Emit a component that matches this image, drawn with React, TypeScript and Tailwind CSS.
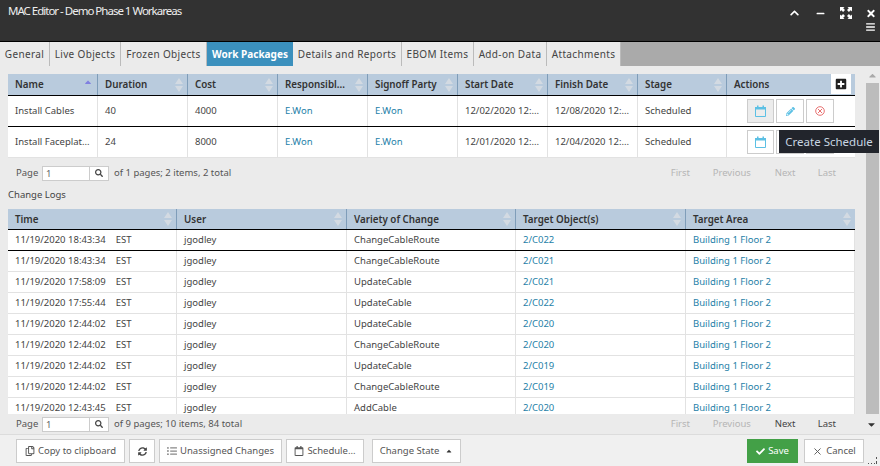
import React from "react";
import { FaChevronUp, FaMinus, FaTimes, FaBars, FaPlusSquare, FaCheck, FaCaretUp, FaCaretDown, FaPencilAlt, FaSearch, FaSyncAlt, FaListUl, FaRegCalendar, FaRegCopy } from "react-icons/fa";
import { X } from "lucide-react";

const font = "font-['Open_Sans',sans-serif]";

function SortIcon() {
  return (
    <svg viewBox="0 0 8 14" className="w-[8px] h-[14px] shrink-0" fill="#d3dae2">
      <path d="M4 0l4 6H0zM0 8h8l-4 6z" />
    </svg>
  );
}

function CalIcon() {
  return (
    <svg viewBox="0 0 11 12" className="w-[11px] h-[12px]" fill="none">
      <path d="M.5 2.500h10v9H.5z" stroke="#5cc0e4" />
      <path d="M0 2h11v2.500H0zM2 .5h1.500v2H2zM7.500.5H9v2H7.500z" fill="#5cc0e4" />
    </svg>
  );
}

function HeadCell({ label, w, sort = "both", last = false }: { label: string; w: string; sort?: string; last?: boolean }) {
  return (
    <div className={`${w} flex items-center justify-between pl-[7px] pr-[4px] ${last ? "" : "border-r border-[#7f9db9]"}`}>
      <span className="font-semibold text-[#333] text-[9.8px] whitespace-nowrap pt-[1px]">{label}</span>
      {sort === "both" && <SortIcon />}
      {sort === "asc" && <FaCaretUp className="text-[#8080e0] w-[10px] h-[10px] -mt-[5px]" />}
    </div>
  );
}

function Cell({ w, children, link = false }: { w: string; children?: React.ReactNode; link?: boolean }) {
  return (
    <div className={`${w} h-full flex items-center pl-[7px] border-r border-[#e2e2e2] whitespace-nowrap ${link ? "text-[#1f7fa8]" : "text-[#444]"}`}>
      {children}
    </div>
  );
}

const packageCols = ["w-[90px]", "w-[90px]", "w-[90px]", "w-[90px]", "w-[90px]", "w-[90px]", "w-[90px]", "w-[89px]"];

const packages = [
  ["Install Cables", "40", "4000", "E.Won", "E.Won", "12/02/2020 12:...", "12/08/2020 12:...", "Scheduled"],
  ["Install Faceplat...", "24", "8000", "E.Won", "E.Won", "12/01/2020 12:...", "12/04/2020 12:...", "Scheduled"],
];

const logCols = ["w-[169px]", "w-[170px]", "w-[169px]", "w-[170px]", "w-[169px]"];

const logs = [
  ["11/19/2020 18:43:34", "ChangeCableRoute", "2/C022"],
  ["11/19/2020 18:43:34", "ChangeCableRoute", "2/C021"],
  ["11/19/2020 17:58:09", "UpdateCable", "2/C021"],
  ["11/19/2020 17:55:44", "UpdateCable", "2/C022"],
  ["11/19/2020 12:44:02", "UpdateCable", "2/C020"],
  ["11/19/2020 12:44:02", "ChangeCableRoute", "2/C020"],
  ["11/19/2020 12:44:02", "UpdateCable", "2/C019"],
  ["11/19/2020 12:44:02", "ChangeCableRoute", "2/C019"],
  ["11/19/2020 12:43:45", "AddCable", "2/C020"],
];

function Pager({ text, nextEnabled = false }: { text: string; nextEnabled?: boolean }) {
  const off = "text-[#b5b5b5]";
  const on = nextEnabled ? "text-[#444]" : off;
  return (
    <div className="flex items-center h-full text-[#555]">
      <span className="ml-[8px] w-[26px]">Page</span>
      <div className="w-[48px] h-[15px] bg-white border border-[#ccc] text-[#666] pl-[3px] leading-[13px]">1</div>
      <div className="w-[19px] h-[15px] bg-white border border-[#ccc] border-l-0 flex items-center justify-center">
        <FaSearch className="w-[8px] h-[8px] text-[#444]" />
      </div>
      <span className="ml-[5px]">{text}</span>
      <div className="ml-auto flex mr-[19px]">
        <span className={`${off} w-[42px]`}>First</span>
        <span className={`${off} w-[62px]`}>Previous</span>
        <span className={`${on} w-[43px]`}>Next</span>
        <span className={on}>Last</span>
      </div>
    </div>
  );
}

function FootBtn({ w, children, ml = "" }: { w: string; children: React.ReactNode; ml?: string }) {
  return (
    <div className={`${w} ${ml} h-[24px] bg-white border border-[#ccc] flex items-center justify-center gap-[3px] text-[#555] whitespace-nowrap`}>
      {children}
    </div>
  );
}

export default function App() {
  return (
    <div className={`${font} relative w-[880px] h-[466px] overflow-hidden flex flex-col bg-[#ebebeb] text-[9.5px] leading-none`}>
      {/* Title bar */}
      <div className="h-[42px] shrink-0 bg-[#323232] border-b border-black flex justify-between text-white">
        <div className="pl-[8px] pt-[5px] text-[11.5px] leading-[12px] tracking-[-1px] text-[#eee]">MAC Editor - Demo Phase 1 Workareas</div>
        <div className="flex flex-col items-end pr-[4px] pt-[7px]">
          <div className="flex items-center">
            <FaChevronUp className="w-[11px] h-[10px]" />
            <FaMinus className="ml-[16px] w-[9px] h-[9px]" />
            <svg viewBox="0 0 12 12" className="ml-[15px] w-[12px] h-[12px]" fill="white">
              <path d="M0 0h4.500L3.200 1.300 5 3.100 3.100 5 1.300 3.200 0 4.500zM12 0v4.500l-1.300-1.300L8.900 5 7 3.100l1.800-1.800L7.500 0zM0 12V7.500l1.300 1.300L3.100 7 5 8.900l-1.800 1.800L4.500 12zM12 12H7.500l1.300-1.300L7 8.900 8.900 7l1.800 1.800L12 7.500z" />
            </svg>
            <FaTimes className="ml-[14px] w-[10px] h-[11px]" />
          </div>
          <FaBars className="mt-[3px] mr-[1px] w-[9px] h-[10px]" />
        </div>
      </div>

      {/* Tabs */}
      <div className="h-[24px] shrink-0 bg-[#aaaaaa] flex text-[10px] tracking-[0.35px] text-[#444]">
        {[
          ["General", "w-[50px]"],
          ["Live Objects", "w-[71px]"],
          ["Frozen Objects", "w-[86px]"],
          ["Work Packages", "w-[86px]"],
          ["Details and Reports", "w-[109px]"],
          ["EBOM Items", "w-[72px]"],
          ["Add-on Data", "w-[73px]"],
          ["Attachments", "w-[74px]"],
        ].map(([t, w]) =>
          t === "Work Packages" ? (
            <div key={t} className={`${w} bg-[#3b90bd] text-white font-bold flex items-center justify-center tracking-[0px]`}>{t}</div>
          ) : (
            <div key={t} className={`${w} bg-[#ebebeb] flex items-center justify-center border-r border-[#bbb]`}>
              <span>{t}</span>
            </div>
          )
        )}
      </div>

      {/* Middle */}
      <div className="flex-1 min-h-0 flex">
        <div className="w-[855px] ml-[8px] shrink-0 flex flex-col min-h-0 -mr-[8px] pr-0">
          <div className="w-[847px] flex-1 min-h-0 flex flex-col pt-[8px]">
            {/* Packages */}
            <div className="h-[22px] shrink-0 flex bg-[#b9cbdd] border-b border-black">
              {["Name", "Duration", "Cost", "Responsibl...", "Signoff Party", "Start Date", "Finish Date", "Stage"].map((h, i) => (
                <HeadCell key={h} label={h} w={packageCols[i]} sort={i === 0 ? "asc" : "both"} />
              ))}
              <div className="flex-1 relative flex items-center pl-[7px] pt-[1px] font-semibold text-[9.8px] text-[#333]">
                Actions
                <div className="absolute right-[4px] top-0 w-[20px] h-[20px] bg-white flex items-center justify-center">
                  <FaPlusSquare className="w-[12px] h-[12px] text-[#222]" />
                </div>
              </div>
            </div>
            {packages.map((r, ri) => (
              <div key={ri} className={`h-[31px] shrink-0 flex items-center bg-white border-b ${ri === 0 ? "border-black" : "border-[#e2e2e2]"}`}>
                {r.map((c, i) => (
                  <Cell key={i} w={packageCols[i]} link={i === 3 || i === 4}>{c}</Cell>
                ))}
                <div className="flex-1 flex items-center pl-[20px] gap-[2px]">
                  <div className={`w-[27px] h-[24px] border border-[#ccc] flex items-center justify-center ${ri === 0 ? "bg-[#ececec]" : "bg-white"}`}>
                    <CalIcon />
                  </div>
                  <div className="w-[28px] h-[24px] border border-[#ccc] flex items-center justify-center">
                    <FaPencilAlt className="w-[9px] h-[9px] text-[#5cc0e4]" />
                  </div>
                  <div className="w-[28px] h-[24px] border border-[#ccc] flex items-center justify-center">
                    <svg viewBox="0 0 10 10" className="w-[10px] h-[10px]" fill="none" stroke="#e87070" strokeWidth="1">
                      <circle cx="5" cy="5" r="4.300" />
                      <path d="M3 3l4 4M7 3l-4 4" />
                    </svg>
                  </div>
                </div>
              </div>
            ))}
            {/* Pager 1 */}
            <div className="h-[30px] shrink-0"><Pager text="of 1 pages; 2 items, 2 total" /></div>
            <div className="h-[21px] shrink-0 flex items-start pt-[2px] text-[#444]">Change Logs</div>

            {/* Logs */}
            <div className="flex-1 min-h-0 overflow-hidden flex flex-col">
              <div className="h-[21px] shrink-0 flex bg-[#b9cbdd] border-b border-black">
                {["Time", "User", "Variety of Change", "Target Object(s)", "Target Area"].map((h, i) => (
                  <HeadCell key={h} label={h} w={logCols[i]} last={i === 4} />
                ))}
              </div>
              {logs.map((r, ri) => (
                <div key={ri} className={`h-[21px] shrink-0 flex items-center bg-white border-b ${ri === 0 ? "border-black" : "border-[#e2e2e2]"}`}>
                  <Cell w={logCols[0]}><span>{r[0]}</span><span className="ml-[10px]">EST</span></Cell>
                  <Cell w={logCols[1]}>jgodley</Cell>
                  <Cell w={logCols[2]}>{r[1]}</Cell>
                  <Cell w={logCols[3]} link>{r[2]}</Cell>
                  <Cell w={logCols[4]} link>Building 1 Floor 2</Cell>
                </div>
              ))}
            </div>
            <div className="h-[20px] shrink-0"><Pager text="of 9 pages; 10 items, 84 total" nextEnabled /></div>
          </div>
        </div>

        {/* Scrollbar */}
        <div className="ml-[10px] w-[15px] flex flex-col items-center pt-[4px]">
          <FaCaretUp className="w-[11px] h-[11px] text-[#aaa]" />
          <div className="mt-[2px] w-[13px] flex-1 bg-[#bcbcbc] mb-[20px]" />
          <FaCaretDown className="absolute top-[419px] right-[3px] w-[11px] h-[11px] text-[#333]" />
        </div>
      </div>

      {/* Footer */}
      <div className="h-[32px] shrink-0 bg-[#f0f0f0] border-t border-[#dcdcdc] flex items-start pt-[4px] pl-[16px] pr-[16px]">
        <FootBtn w="w-[109px]"><FaRegCopy className="w-[10px] h-[10px] text-[#555]" /> Copy to clipboard</FootBtn>
        <FootBtn w="w-[26px]" ml="ml-[4px]"><FaSyncAlt className="w-[9px] h-[9px] text-[#444]" /></FootBtn>
        <FootBtn w="w-[123px]" ml="ml-[4px]"><FaListUl className="w-[10px] h-[10px] text-[#888]" /> Unassigned Changes</FootBtn>
        <FootBtn w="w-[78px]" ml="ml-[4px]"><FaRegCalendar className="w-[10px] h-[10px] text-[#555]" />Schedule...</FootBtn>
        <FootBtn w="w-[89px]" ml="ml-[8px]">Change State <FaCaretUp className="ml-[3px] w-[8px] h-[8px] text-[#333]" /></FootBtn>
        <div className="ml-auto flex">
          <div className="w-[51px] h-[24px] bg-[#43a047] text-white flex items-center justify-center gap-[3px]">
            <FaCheck className="w-[9px] h-[9px]" /> Save
          </div>
          <div className="ml-[6px] w-[60px] h-[24px] bg-white border border-[#ccc] flex items-center justify-center gap-[3px] text-[#555]">
            <X className="w-[11px] h-[11px]" /> Cancel
          </div>
        </div>
        <svg viewBox="0 0 10 8" className="absolute right-[2px] bottom-[2px] w-[10px] h-[8px]" fill="#555">
          <path d="M0 7h1v1H0zM3 7h1v1H3zM6 7h1v1H6zM8 5h1v3H8zM8 1h1v2H8z" />
        </svg>
      </div>

      {/* Tooltip */}
      <div className="absolute left-[779px] top-[130px] w-[100px] h-[23px] bg-[#22252c] text-[#c9d6e2] text-[11.5px] flex items-center justify-center whitespace-nowrap">
        Create Schedule
      </div>
    </div>
  );
}
